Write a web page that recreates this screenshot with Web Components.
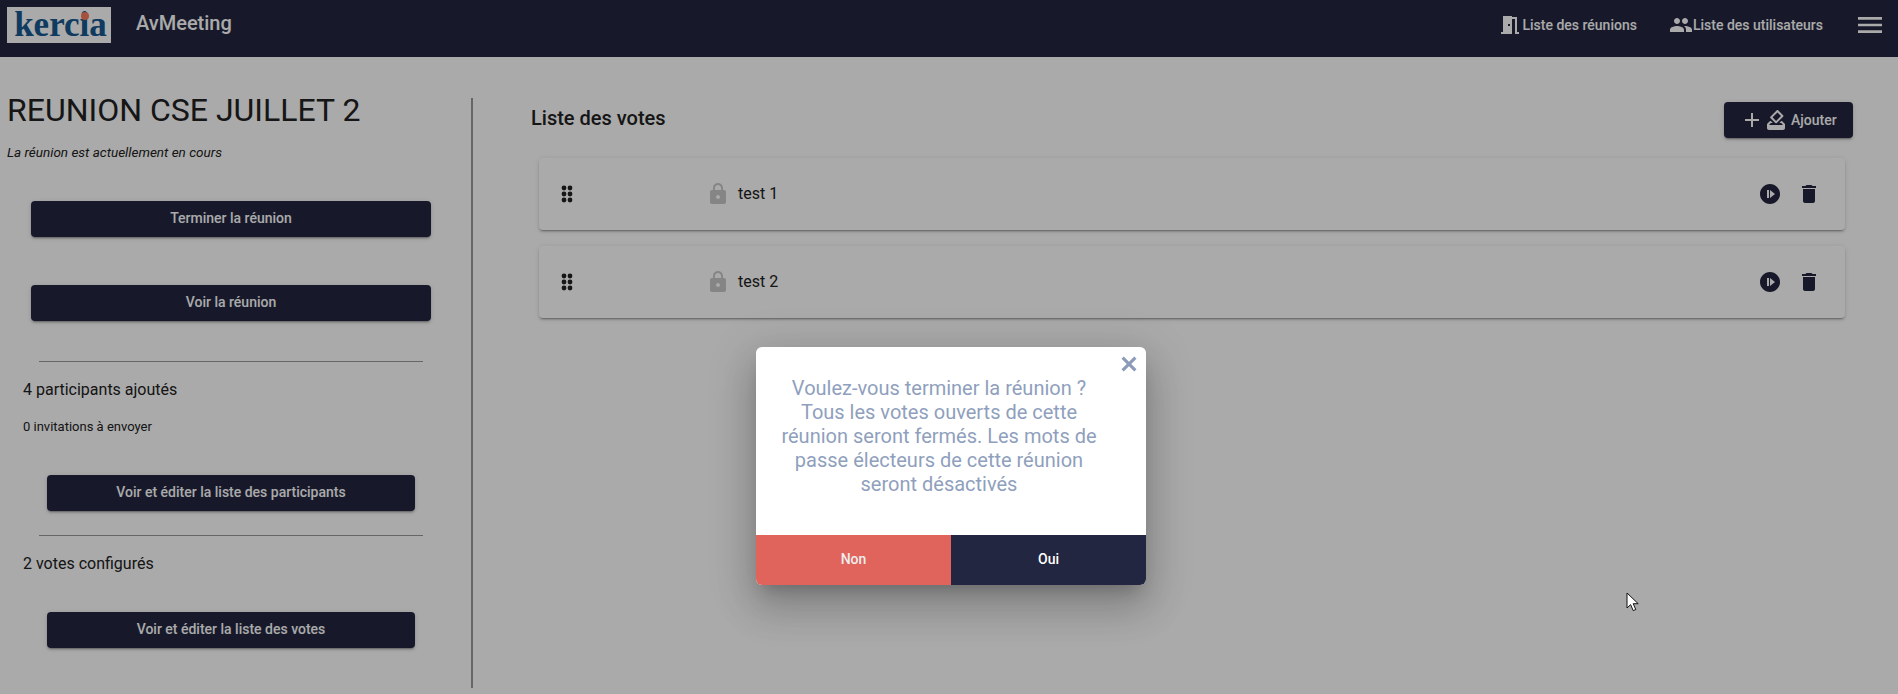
<!DOCTYPE html>
<html lang="fr">
<head>
<meta charset="utf-8">
<title>AvMeeting</title>
<style>
  html, body { margin: 0; height: 100%; overflow: hidden; background: #fff; }
  body { font-family: Roboto, "Liberation Sans", sans-serif; color: #212121; }
</style>
</head>
<body>
<app-root></app-root>

<script>
// material icon paths
const ICONS = {
  door: 'M14 6v15H3v-2h2V3h9v1h5v15h2v2h-4V6h-3zm-4 5v2h2v-2h-2z',
  people: 'M16 11c1.66 0 2.99-1.34 2.99-3S17.66 5 16 5c-1.66 0-3 1.34-3 3s1.34 3 3 3zm-8 0c1.66 0 2.99-1.34 2.99-3S9.66 5 8 5C6.34 5 5 6.34 5 8s1.34 3 3 3zm0 2c-2.33 0-7 1.17-7 3.5V19h14v-2.5c0-2.33-4.67-3.5-7-3.5zm8 0c-.29 0-.62.02-.97.05 1.16.84 1.97 1.97 1.97 3.45V19h6v-2.5c0-2.33-4.67-3.5-7-3.5z',
  menu: 'M3 18h18v-2H3v2zm0-5h18v-2H3v2zm0-7v2h18V6H3z',
  lock: 'M18 8h-1V6c0-2.76-2.24-5-5-5S7 3.24 7 6v2H6c-1.1 0-2 .9-2 2v10c0 1.1.9 2 2 2h12c1.1 0 2-.9 2-2V10c0-1.1-.9-2-2-2zm-6 9c-1.1 0-2-.9-2-2s.9-2 2-2 2 .9 2 2-.9 2-2 2zm3.1-9H8.9V6c0-1.71 1.39-3.1 3.1-3.1 1.71 0 3.1 1.39 3.1 3.1v2z',
  start: 'M12 2C6.48 2 2 6.48 2 12s4.48 10 10 10 10-4.48 10-10S17.52 2 12 2zm-1 14H9V8h2v8zm1 0V8l5 4-5 4z',
  trash: 'M6 19c0 1.1.9 2 2 2h8c1.1 0 2-.9 2-2V7H6v12zM19 4h-3.5l-1-1h-5l-1 1H5v2h14V4z',
  plus: 'M19 13h-6v6h-2v-6H5v-2h6V5h2v6h6v2z',
  vote: 'M18 13h-.68l-2 2h1.91L19 17H5l1.78-2h2.05l-2-2H6l-3 3v4c0 1.1.89 2 1.99 2H19c1.1 0 2-.89 2-2v-4l-3-3zm-1-5.05l-4.95 4.95-3.54-3.54 4.95-4.95L17 7.95zm-4.24-5.66L6.39 8.66c-.39.39-.39 1.02 0 1.41l4.95 4.95c.39.39 1.02.39 1.41 0l6.36-6.36c.39-.39.39-1.02 0-1.41L14.16 2.3c-.38-.4-1.01-.4-1.4-.01z',
  close: 'M5 2L12 9L19 2L22 5L15 12L22 19L19 22L12 15L5 22L2 19L9 12L2 5z'
};

class AppIcon extends HTMLElement {
  connectedCallback() {
    const size = this.getAttribute('size') || 24;
    const shadow = this.attachShadow({mode:'open'});
    shadow.innerHTML = `
      <style>
        :host { display:inline-block; width:${size}px; height:${size}px; flex:none; line-height:0; }
        svg { display:block; width:100%; height:100%; fill:currentColor; }
      </style>
      <svg viewBox="0 0 24 24"><path d="${ICONS[this.getAttribute('name')]}"></path></svg>`;
  }
}
customElements.define('app-icon', AppIcon);

class AppButton extends HTMLElement {
  constructor() {
    super();
    this.attachShadow({mode:'open'}).innerHTML = `
      <style>
        :host {
          display:flex; align-items:center; justify-content:center;
          height:36px; box-sizing:border-box; padding-bottom:2px;
          background:#232640; color:#fff; border-radius:4px;
          font:500 14px/20px Roboto, "Liberation Sans", sans-serif;
          box-shadow:0 3px 1px -2px rgba(0,0,0,.2), 0 2px 2px 0 rgba(0,0,0,.14), 0 1px 5px 0 rgba(0,0,0,.12);
        }
      </style>
      <slot></slot>`;
  }
}
customElements.define('app-button', AppButton);

const toolbarTemplate = document.createElement('template');
toolbarTemplate.innerHTML = `
  <style>
    :host {
      display:flex; align-items:flex-start; height:57px; box-sizing:border-box;
      background:#232640; color:#fff;
      font-family:Roboto, "Liberation Sans", sans-serif;
    }
    .logo {
      position:relative; width:101px; height:36px; margin:7px 0 0 7px; padding-left:3px; background:#fff;
      color:#16598f; font:700 35px/36px "Liberation Serif", serif; text-align:center;
    }
    .logo i { position:absolute; left:74px; top:5px; width:8px; height:8px; border-radius:50%; background:#f87a5e; }
    .title { margin:10px 0 0 25px; font-size:20px; font-weight:500; line-height:26px; }
    .spacer { flex:1; }
    .link { display:flex; align-items:center; font-size:14px; font-weight:500; height:24px; margin-top:13px; }
    .link.a { margin-right:32px; }
    .link.b { margin-right:31px; }
    .menu { width:32px; height:32px; margin:9px 12px 0 0; }
  </style>
  <div class="logo">kercia<i></i></div>
  <div class="title">AvMeeting</div>
  <div class="spacer"></div>
  <div class="link a"><app-icon name="door"></app-icon>Liste des réunions</div>
  <div class="link b"><app-icon name="people"></app-icon>Liste des utilisateurs</div>
  <app-icon class="menu" name="menu" size="32"></app-icon>
`;
class AppToolbar extends HTMLElement {
  constructor() {
    super();
    this.attachShadow({mode:'open'}).appendChild(toolbarTemplate.content.cloneNode(true));
  }
}
customElements.define('app-toolbar', AppToolbar);

const panelTemplate = document.createElement('template');
panelTemplate.innerHTML = `
  <style>
    :host {
      display:block; width:471px; height:590px; box-sizing:content-box; flex:none;
      border-right:2px solid #9a9a9a; margin-top:41px;
      color:#212121;
    }
    h1 { margin:0 0 0 7px; font-size:32px; font-weight:400; line-height:24px; height:24px; white-space:nowrap; }
    em { display:block; margin:22px 0 0 7px; font-size:13.5px; line-height:16px; }
    app-button.wide { margin:0 40px 0 31px; }
    app-button.small { margin:0 56px 0 47px; }
    .first { margin-top:41px !important; }
    .second { margin-top:48px !important; }
    hr { height:1px; border:0; background:#999; margin:0 48px 0 39px; }
    p { margin:0 0 0 23px; font-size:16px; line-height:20px; }
    small { display:block; margin:0 0 0 23px; font-size:13px; line-height:16px; }
  </style>
  <h1><slot name="title"></slot></h1>
  <em>La réunion est actuellement en cours</em>
  <app-button class="wide first">Terminer la réunion</app-button>
  <app-button class="wide second">Voir la réunion</app-button>
  <hr style="margin-top:40px">
  <p style="margin-top:18px">4 participants ajoutés</p>
  <small style="margin-top:19px">0 invitations à envoyer</small>
  <app-button class="small" style="margin-top:40px">Voir et éditer la liste des participants</app-button>
  <hr style="margin-top:24px">
  <p style="margin-top:18px">2 votes configurés</p>
  <app-button class="small" style="margin-top:38px">Voir et éditer la liste des votes</app-button>
`;
class MeetingPanel extends HTMLElement {
  constructor() {
    super();
    this.attachShadow({mode:'open'}).appendChild(panelTemplate.content.cloneNode(true));
  }
}
customElements.define('meeting-panel', MeetingPanel);

const cardTemplate = document.createElement('template');
cardTemplate.innerHTML = `
  <style>
    :host {
      display:flex; align-items:center; height:72px; box-sizing:border-box;
      background:#fff; border-radius:4px; color:#212121;
      font:400 16px Roboto, "Liberation Sans", sans-serif;
      box-shadow:0 3px 1px -2px rgba(0,0,0,.2), 0 2px 2px 0 rgba(0,0,0,.14), 0 1px 5px 0 rgba(0,0,0,.12);
    }
    .drag { width:12px; height:18px; margin-left:22px; flex:none; }
    .drag circle { fill:#212121; }
    .lock { margin-left:133px; color:#c8c8c8; }
    .name { margin-left:8px; flex:1; margin-top:-1px; }
    .start, .trash { color:#232640; }
    .trash { margin:0 24px 0 15px; }
  </style>
  <svg class="drag" viewBox="0 0 12 18">
    <circle cx="3" cy="3" r="2.4"></circle><circle cx="9" cy="3" r="2.4"></circle>
    <circle cx="3" cy="9" r="2.4"></circle><circle cx="9" cy="9" r="2.4"></circle>
    <circle cx="3" cy="15" r="2.4"></circle><circle cx="9" cy="15" r="2.4"></circle>
  </svg>
  <app-icon class="lock" name="lock"></app-icon>
  <div class="name"><slot></slot></div>
  <app-icon class="start" name="start"></app-icon>
  <app-icon class="trash" name="trash"></app-icon>
`;
class VoteCard extends HTMLElement {
  constructor() {
    super();
    this.attachShadow({mode:'open'}).appendChild(cardTemplate.content.cloneNode(true));
  }
}
customElements.define('vote-card', VoteCard);

const listTemplate = document.createElement('template');
listTemplate.innerHTML = `
  <style>
    :host { display:block; flex:1; min-width:0; padding:45px 45px 0 58px; color:#212121; }
    header { display:flex; justify-content:space-between; align-items:flex-start; height:56px; }
    h2 { margin:3px 0 0; font-size:20px; font-weight:500; line-height:26px; }
    app-button { width:129px; justify-content:flex-start; padding-left:16px; }
    app-button span { display:flex; align-items:center; height:24px; margin-top:1px; }
    .v { width:24px; height:24px; margin:0 3px 0 0; }
    .cards { display:flex; flex-direction:column; gap:16px; margin:0 8px; }
  </style>
  <header>
    <h2>Liste des votes</h2>
    <app-button><span><app-icon name="plus"></app-icon><app-icon class="v" name="vote"></app-icon>Ajouter</span></app-button>
  </header>
  <div class="cards"><slot></slot></div>
`;
class VoteList extends HTMLElement {
  constructor() {
    super();
    this.attachShadow({mode:'open'}).appendChild(listTemplate.content.cloneNode(true));
  }
}
customElements.define('vote-list', VoteList);

const dialogTemplate = document.createElement('template');
dialogTemplate.innerHTML = `
  <style>
    :host {
      position:absolute; inset:0; z-index:10; display:block;
      background:rgba(0,0,0,.333);
      font-family:Roboto, "Liberation Sans", sans-serif;
    }
    .box {
      position:absolute; left:756px; top:347px; width:390px; height:238px;
      display:flex; flex-direction:column;
      background:#fff; border-radius:6px; overflow:hidden;
    }
    .shadow {
      position:absolute; left:756px; top:347px; width:390px; height:238px; border-radius:6px;
      box-shadow:0 11px 15px -7px rgba(0,0,0,.2), 0 24px 38px 3px rgba(0,0,0,.14), 0 9px 46px 8px rgba(0,0,0,.12);
    }
    .close { display:flex; justify-content:flex-end; height:29px; padding:8px 8px 0 0; color:#8c9bba; box-sizing:border-box; }
    .close app-icon { width:18px; height:18px; }
    .text {
      flex:1; margin:0 40px 0 16px; text-align:center; color:#8f9fbd;
      font-size:20px; line-height:24px;
    }
    .actions { display:grid; grid-template-columns:1fr 1fr; height:50px; font-size:14px; font-weight:500; }
    .actions div { display:flex; align-items:center; justify-content:center; padding-bottom:2px; }
    .no { background:#e0635c; color:#eee; }
    .yes { background:#232640; color:#fff; }
  </style>
  <div class="shadow"></div>
  <div class="box">
    <div class="close"><app-icon name="close" size="18"></app-icon></div>
    <div class="text"><slot></slot></div>
    <div class="actions"><div class="no">Non</div><div class="yes">Oui</div></div>
  </div>
`;
class ConfirmDialog extends HTMLElement {
  constructor() {
    super();
    this.attachShadow({mode:'open'}).appendChild(dialogTemplate.content.cloneNode(true));
  }
}
customElements.define('confirm-dialog', ConfirmDialog);

const rootTemplate = document.createElement('template');
rootTemplate.innerHTML = `
  <style>
    :host { display:block; position:relative; width:1898px; height:694px; overflow:hidden; font-family:Roboto, "Liberation Sans", sans-serif; }
    main { display:flex; align-items:flex-start; }
    .cursor { position:absolute; left:1626px; top:592px; width:13px; height:20px; z-index:20; }
  </style>
  <app-toolbar></app-toolbar>
  <main>
    <meeting-panel><span slot="title">REUNION CSE JUILLET 2</span></meeting-panel>
    <vote-list>
      <vote-card>test 1</vote-card>
      <vote-card>test 2</vote-card>
    </vote-list>
  </main>
  <confirm-dialog>Voulez-vous terminer la réunion ?<br>Tous les votes ouverts de cette réunion seront fermés. Les mots de passe électeurs de cette réunion seront désactivés</confirm-dialog>
  <svg class="cursor" viewBox="0 0 13 20"><path d="M1 1v15l3.6-3.4 2.6 6 2.6-1.1-2.6-5.8h5z" fill="#fff" stroke="#111" stroke-width="1"></path></svg>
`;
class AppRoot extends HTMLElement {
  constructor() {
    super();
    this.attachShadow({mode:'open'}).appendChild(rootTemplate.content.cloneNode(true));
  }
}
customElements.define('app-root', AppRoot);
</script>
</body>
</html>
